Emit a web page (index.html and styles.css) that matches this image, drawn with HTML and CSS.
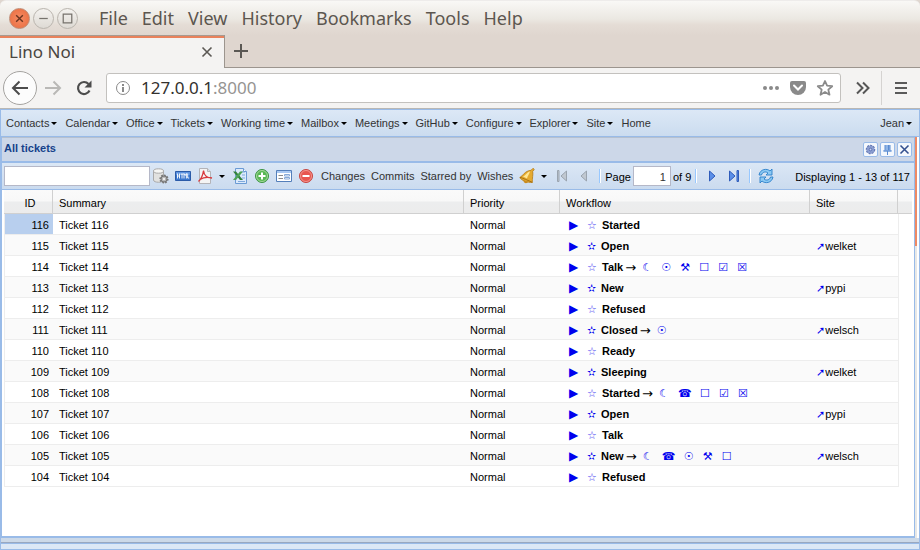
FILE: index.html
```html
<!DOCTYPE html>
<html lang="en">
<head>
<meta charset="utf-8">
<title>Lino Noi</title>
<link rel="stylesheet" href="styles.css">
</head>
<body>
<header class="titlebar">
  <div class="winbtns">
    <button class="win win-close" aria-label="Close window"><svg viewBox="0 0 20 20"><path d="M6.500 6.500l7 7M13.500 6.500l-7 7"/></svg></button>
    <button class="win" aria-label="Minimize"><svg viewBox="0 0 20 20"><path d="M5.500 10h9"/></svg></button>
    <button class="win" aria-label="Maximize"><svg viewBox="0 0 20 20"><path d="M5.500 5.500h9v9h-9z"/></svg></button>
  </div>
  <nav class="appmenu">
    <button>File</button><button>Edit</button><button>View</button><button>History</button><button>Bookmarks</button><button>Tools</button><button>Help</button>
  </nav>
</header>
<div class="tabs">
  <div class="tab"><span>Lino Noi</span>
    <button class="plain" aria-label="Close tab"><svg width="12" height="12" viewBox="0 0 12 12"><path d="M1.500 1.500l9 9M10.500 1.500l-9 9" stroke="#5b5854" stroke-width="1.600"/></svg></button>
  </div>
  <div class="tabfill"><button class="plain" aria-label="New tab"><svg width="16" height="16" viewBox="0 0 16 16"><path d="M8 1v14M1 8h14" stroke="#5b5854" stroke-width="2"/></svg></button></div>
</div>
<div class="navbar">
  <button class="back" aria-label="Back"><svg width="18" height="18" viewBox="0 0 18 18"><path d="M17 9H2M8.500 2.500L2 9l6.500 6.500" fill="none" stroke="#4c4c4c" stroke-width="2"/></svg></button>
  <button class="plain" aria-label="Forward"><svg width="18" height="18" viewBox="0 0 18 18"><path d="M1 9h15M9.500 2.500L16 9l-6.500 6.500" fill="none" stroke="#b9b8b6" stroke-width="2"/></svg></button>
  <button class="plain" aria-label="Reload"><svg width="18" height="18" viewBox="0 0 18 18"><path d="M14.500 11.500A6 6 0 1 1 13.500 5" fill="none" stroke="#4c4c4c" stroke-width="2.200"/><path d="M16.500 1.500v7h-7z" fill="#4c4c4c"/></svg></button>
  <div class="urlbox">
    <svg width="16" height="16" viewBox="0 0 16 16"><circle cx="8" cy="8" r="6.500" fill="none" stroke="#8a8a8a"/><path d="M8 7v5M8 4v2" stroke="#6d6d6d" stroke-width="1.600"/></svg>
    <div class="url">127.0.0.1<span>:8000</span></div>
    <svg width="18" height="6" viewBox="0 0 18 6" fill="#8a8a8a"><circle cx="3" cy="3" r="2"/><circle cx="9" cy="3" r="2"/><circle cx="15" cy="3" r="2"/></svg>
    <svg width="16" height="16" viewBox="0 0 16 16"><path d="M2 1h12q2 0 2 2v4a8 8 0 0 1-16 0V3q0-2 2-2z" fill="#8a8a8a"/><path d="M4 5.500l4 4 4-4" fill="none" stroke="#fff" stroke-width="2" stroke-linecap="round"/></svg>
    <svg width="18" height="18" viewBox="0 0 18 18"><path d="M9 2l2.100 4.700 5.100.5-3.900 3.400 1.200 5.100L9 13l-4.500 2.700 1.200-5.100L1.800 7.200l5.100-.5z" fill="none" stroke="#8a8a8a" stroke-width="1.800" stroke-linejoin="round"/></svg>
  </div>
  <button class="plain more" aria-label="More tools"><svg width="14" height="14" viewBox="0 0 14 14"><path d="M1 1.500L6.500 7 1 12.500M7 1.500L12.500 7 7 12.500" fill="none" stroke="#565656" stroke-width="2"/></svg></button>
  <button class="burger" aria-label="Open menu"><svg width="12" height="12" viewBox="0 0 12 12"><path d="M0 1h12M0 6h12M0 11h12" stroke="#5a5a5a" stroke-width="2"/></svg></button>
</div>
<main class="page">
  <nav class="menubar">
    <button class="dd">Contacts</button><button class="dd">Calendar</button><button class="dd">Office</button><button class="dd">Tickets</button><button class="dd">Working time</button><button class="dd">Mailbox</button><button class="dd">Meetings</button><button class="dd">GitHub</button><button class="dd">Configure</button><button class="dd">Explorer</button><button class="dd">Site</button><button>Home</button><button class="dd user">Jean</button>
  </nav>
  <div class="desk">
    <section class="panel">
      <div class="phead"><h1>All tickets</h1>
        <button class="tool" aria-label="Settings"><svg viewBox="0 0 13 13"><circle cx="6.500" cy="6.500" r="4" fill="#8a9dd0" stroke="#6478b4" stroke-width="1.500" stroke-dasharray="2 1"/><circle cx="6.500" cy="6.500" r="3.500" fill="#8a9dd0"/><circle cx="6.500" cy="6.500" r="1.300" fill="#c9d5f2" stroke="#5065a8" stroke-width=".8"/></svg></button>
        <button class="tool" aria-label="Pin"><svg viewBox="0 0 13 13"><path d="M4 2h5v5h1.500v1.500h-8V7H4z" fill="#8fb4e6"/><path d="M4 2v5M7.500 2v5M9 2v5M2.500 8h8M6.500 8v4" stroke="#5a8bd0" fill="none"/></svg></button>
        <button class="tool" aria-label="Close"><svg viewBox="0 0 13 13"><path d="M2.500 2.500l8 8M10.500 2.500l-8 8" stroke="#34508f" stroke-width="1.600"/></svg></button>
      </div>
      <div class="toolbar">
        <input class="search" type="text" aria-label="Quick search">
        <button class="ic" aria-label="Parameters"><svg viewBox="0 0 16 16"><path d="M.5 3v9c0 3 10 3 10 0V3z" fill="#e2e2e0" stroke="#aaa"/><ellipse cx="5.500" cy="3" rx="5" ry="2.200" fill="#f6f6f4" stroke="#aaa"/><circle cx="11" cy="11" r="3.400" fill="#aaa" stroke="#777" stroke-width="2.400" stroke-dasharray="1.600 1"/><circle cx="11" cy="11" r="3" fill="#b4b4b4" stroke="#777"/><circle cx="11" cy="11" r="1.200" fill="#eee"/></svg></button>
        <button class="ic" aria-label="HTML"><svg viewBox="0 0 16 16"><path d="M.5 3.500h15v9H.5z" fill="#3976ce" stroke="#2b5ba8"/><path d="M1 4h14v3H1z" fill="#5d93df"/><path d="M2.500 5.500v5M4.500 5.500v5M2.500 8h2M5.500 6h3M7 6v4.500M9 10.500v-5l1.200 2 1.200-2v5M12.700 5.500V10h1.500" fill="none" stroke="#fff" stroke-width=".9"/></svg></button>
        <button class="ic" aria-label="PDF"><svg viewBox="0 0 16 16"><path d="M2.500.5h8l3 3v12h-11z" fill="#f4f4f4" stroke="#b4b4b8"/><path d="M10.500.5v3h3" fill="#ddd" stroke="#b4b4b8"/><path d="M6.500 2.500C6 6 6 9 1.500 13.500M6.500 2.500C7 7 10 10 15 10M3 11.500c4-2.500 8-2.500 12-1.500" fill="none" stroke="#d8393c" stroke-width="1.300"/></svg></button>
        <button class="arrow" aria-label="PDF options"></button>
        <button class="ic" aria-label="Excel"><svg viewBox="0 0 16 16"><path d="M3.500.5h8l3 3v12h-11z" fill="#dceafb" stroke="#6b9bd4"/><path d="M9 4h4M10 7h3M10 10h3M6 13.500h7" stroke="#7fa9dc"/><path d="M11.500.5v3h3" fill="#fff" stroke="#6b9bd4"/><path d="M1 3.500h3l7 8.500H8z" fill="#32813c"/><path d="M8 3.500h3L4 12H1z" fill="#4da357"/></svg></button>
        <button class="ic" aria-label="Insert"><svg viewBox="0 0 16 16"><circle cx="8" cy="8" r="6.500" fill="#58b754" stroke="#3c9443"/><circle cx="8" cy="8" r="5.500" fill="none" stroke="#a5d89c"/><path d="M8 4.500v7M4.500 8h7" stroke="#fff" stroke-width="2"/></svg></button>
        <button class="ic" aria-label="Detail"><svg viewBox="0 0 16 16"><path d="M.5 2.500h15v11H.5z" fill="#fff" stroke="#547fba"/><path d="M1 3h14v2H1z" fill="#a9c8f2"/><path d="M2.500 7.500H7M2.500 10.500H7" stroke="#8b8b8b"/><path d="M8.500 6.500h5v1.500h-5zM8.500 9.500h5V11h-5z" fill="#fff" stroke="#87a9d8"/></svg></button>
        <button class="ic" aria-label="Delete"><svg viewBox="0 0 16 16"><circle cx="8" cy="8" r="6.500" fill="#e8564f" stroke="#c64742"/><circle cx="8" cy="8" r="5.500" fill="none" stroke="#f2958d"/><path d="M4.500 8h7" stroke="#fff" stroke-width="2"/></svg></button>
        <button class="tx">Changes</button><button class="tx">Commits</button><button class="tx">Starred by</button><button class="tx">Wishes</button>
        <button class="ic" aria-label="Notify"><svg viewBox="0 0 16 16"><path d="M14 .3l1.300 1.200-1.600 1.800c.6 4-.6 6.500-.4 11.200C9 14.500 2 12.500.8 9.500 4.500 7.500 5.500 3 12 2.300z" fill="#e5aa30" stroke="#b57a14" stroke-width=".8"/><path d="M4 8.500c3-1.500 4-4.500 7-5-.8 3-2.500 4.500-3 7z" fill="#ffe694"/><path d="M1 9.300c3 1 8 3 12.300 5" fill="none" stroke="#a66f12"/><path d="M4.500 12.500c0 3 3.500 3.500 4.500 1.500z" fill="#c98a1c"/></svg></button>
        <button class="arrow" aria-label="Notify options"></button>
        <button class="ic" aria-label="First page"><svg viewBox="0 0 16 16"><path d="M3.500 2.500h1.500v11H3.500zM12.500 3v10L7 8z" fill="#c0c8d1" stroke="#9aa4af"/></svg></button>
        <button class="ic" aria-label="Previous page"><svg viewBox="0 0 16 16"><path d="M10.500 3v10L5 8z" fill="#c0c8d1" stroke="#9aa4af"/></svg></button>
        <i class="sep"></i>
        <label class="pg" for="page">Page</label><input id="page" class="pageno" type="text" value="1"><span class="of">of 9</span>
        <i class="sep"></i>
        <button class="ic" aria-label="Next page"><svg viewBox="0 0 16 16"><path d="M5.500 3v10L11 8z" fill="#5b8fe8" stroke="#2f5cba"/></svg></button>
        <button class="ic" aria-label="Last page"><svg viewBox="0 0 16 16"><path d="M3.500 3v10L9 8zM11 2.500h1.500v11H11z" fill="#5b8fe8" stroke="#2f5cba"/></svg></button>
        <i class="sep"></i>
        <button class="ic" aria-label="Refresh"><svg viewBox="0 0 16 16"><path d="M1 7c1-6 8-7 11-4l2-2v6H8l2-2C8 3 4 4 3.500 7z" fill="#8cc9f3" stroke="#2b7fc9" stroke-width=".9"/><path d="M15 9c-1 6-8 7-11 4l-2 2V9h6l-2 2c2 2 6 1 6.500-2z" fill="#8cc9f3" stroke="#2b7fc9" stroke-width=".9"/></svg></button>
        <span class="info">Displaying 1 - 13 of 117</span>
      </div>
      <table class="grid">
        <colgroup><col class="c-id"><col><col class="c-pr"><col class="c-wf"><col class="c-site"><col class="c-end"></colgroup>
        <thead><tr><th class="id">ID</th><th>Summary</th><th>Priority</th><th>Workflow</th><th>Site</th><th></th></tr></thead>
        <tbody>
          <tr><td class="id sel">116</td><td>Ticket 116</td><td>Normal</td><td><div class="wf"><a href="#" class="go">▶</a><a href="#" class="st">☆</a><b>Started</b></div></td><td></td><td class="end"></td></tr>
          <tr><td class="id">115</td><td>Ticket 115</td><td>Normal</td><td><div class="wf"><a href="#" class="go">▶</a><a href="#" class="on">✫</a><b>Open</b></div></td><td><a href="#">➚</a>welket</td><td class="end"></td></tr>
          <tr><td class="id">114</td><td>Ticket 114</td><td>Normal</td><td><div class="wf"><a href="#" class="go">▶</a><a href="#" class="st">☆</a><b>Talk</b><i>→</i><a href="#" class="s">☾</a><a href="#" class="s">☉</a><a href="#" class="s">⚒</a><a href="#" class="s">☐</a><a href="#" class="s">☑</a><a href="#" class="s">☒</a></div></td><td></td><td class="end"></td></tr>
          <tr><td class="id">113</td><td>Ticket 113</td><td>Normal</td><td><div class="wf"><a href="#" class="go">▶</a><a href="#" class="on">✫</a><b>New</b></div></td><td><a href="#">➚</a>pypi</td><td class="end"></td></tr>
          <tr><td class="id">112</td><td>Ticket 112</td><td>Normal</td><td><div class="wf"><a href="#" class="go">▶</a><a href="#" class="st">☆</a><b>Refused</b></div></td><td></td><td class="end"></td></tr>
          <tr><td class="id">111</td><td>Ticket 111</td><td>Normal</td><td><div class="wf"><a href="#" class="go">▶</a><a href="#" class="on">✫</a><b>Closed</b><i>→</i><a href="#" class="s">☉</a></div></td><td><a href="#">➚</a>welsch</td><td class="end"></td></tr>
          <tr><td class="id">110</td><td>Ticket 110</td><td>Normal</td><td><div class="wf"><a href="#" class="go">▶</a><a href="#" class="st">☆</a><b>Ready</b></div></td><td></td><td class="end"></td></tr>
          <tr><td class="id">109</td><td>Ticket 109</td><td>Normal</td><td><div class="wf"><a href="#" class="go">▶</a><a href="#" class="on">✫</a><b>Sleeping</b></div></td><td><a href="#">➚</a>welket</td><td class="end"></td></tr>
          <tr><td class="id">108</td><td>Ticket 108</td><td>Normal</td><td><div class="wf"><a href="#" class="go">▶</a><a href="#" class="st">☆</a><b>Started</b><i>→</i><a href="#" class="s">☾</a><a href="#" class="s tel">☎</a><a href="#" class="s">☐</a><a href="#" class="s">☑</a><a href="#" class="s">☒</a></div></td><td></td><td class="end"></td></tr>
          <tr><td class="id">107</td><td>Ticket 107</td><td>Normal</td><td><div class="wf"><a href="#" class="go">▶</a><a href="#" class="on">✫</a><b>Open</b></div></td><td><a href="#">➚</a>pypi</td><td class="end"></td></tr>
          <tr><td class="id">106</td><td>Ticket 106</td><td>Normal</td><td><div class="wf"><a href="#" class="go">▶</a><a href="#" class="st">☆</a><b>Talk</b></div></td><td></td><td class="end"></td></tr>
          <tr><td class="id">105</td><td>Ticket 105</td><td>Normal</td><td><div class="wf"><a href="#" class="go">▶</a><a href="#" class="on">✫</a><b>New</b><i>→</i><a href="#" class="s">☾</a><a href="#" class="s tel">☎</a><a href="#" class="s">☉</a><a href="#" class="s">⚒</a><a href="#" class="s">☐</a></div></td><td><a href="#">➚</a>welsch</td><td class="end"></td></tr>
          <tr><td class="id">104</td><td>Ticket 104</td><td>Normal</td><td><div class="wf"><a href="#" class="go">▶</a><a href="#" class="st">☆</a><b>Refused</b></div></td><td></td><td class="end"></td></tr>
        </tbody>
      </table>
    </section>
    <div class="scroll"><div class="thumb"></div></div>
  </div>
  <div class="foot"></div>
  <div class="status"></div>
</main>
</body>
</html>
```
FILE: styles.css
```css
* { box-sizing: border-box; }
body {
  margin: 0;
  min-height: 100vh;
  display: flex;
  flex-direction: column;
  background: #dfd6cf;
  font: 11px/13px "Liberation Sans", Arial, sans-serif;
  color: #000;
}
button { font: inherit; color: inherit; background: none; border: 0; padding: 0; white-space: nowrap; }
svg { display: block; flex: none; }

/* Window frame */
.titlebar {
  height: 35px;
  display: flex;
  align-items: center;
  padding-left: 9px;
  border-radius: 6px 6px 0 0;
  background: linear-gradient(#f9f8f6 0, #ebe8e2 18px, #e4dcd5 24px, #dfd6cf 35px);
  border-top: 1px solid #eeeceb;
}
.winbtns { display: flex; gap: 3px; }
.win {
  width: 21px;
  height: 21px;
  border: 1px solid #b9b4ad;
  border-radius: 50%;
  background: linear-gradient(#f4f2ef, #dedad4);
}
.win svg { width: 19px; height: 19px; fill: none; stroke: #76726c; stroke-width: 1.3; }
.win-close { background: radial-gradient(#f58b63, #e96b3d); border-color: #bf8a73; }
.win-close svg { stroke: #6b3420; stroke-width: 1.5; }
.appmenu {
  display: flex;
  gap: 14px;
  margin-left: 21px;
  font: 18px/24px "Noto Sans", sans-serif;
  color: #5c564f;
}

.tabs { display: flex; height: 33px; }
.tab {
  width: 225px;
  display: flex;
  align-items: center;
  justify-content: space-between;
  padding: 0 11px 0 9px;
  background: #f4f3f2;
  border-right: 1px solid #9c958e;
  box-shadow: inset 0 1px #a79a90, inset 0 3px #e9825c;
  font: 17px/24px "Noto Sans", sans-serif;
  color: #4a4641;
}
.tabfill { flex: 1; padding: 8px; border-bottom: 1px solid #9c958e; }

.navbar {
  height: 41px;
  display: flex;
  align-items: center;
  padding: 0 0 0 3px;
  gap: 13px;
  background: #f4f3f2;
  border-bottom: 1px solid #b9b7b4;
}
.back {
  width: 34px;
  height: 34px;
  margin-right: -6px;
  display: grid;
  place-items: center;
  background: #fcfcfc;
  border: 1px solid #a5a3a0;
  border-radius: 50%;
}
.urlbox {
  flex: 1;
  height: 30px;
  display: flex;
  align-items: center;
  gap: 10px;
  padding: 0 6px 0 8px;
  background: #fff;
  border: 1px solid #c3c1be;
  border-radius: 3px;
}
.url { flex: 1; font: 17px/24px "Noto Sans", sans-serif; color: #33312e; }
.url span { color: #969492; }
.more { margin-left: 2px; }
.burger { width: 39px; height: 34px; padding-left: 13px; margin-left: -2px; border-left: 1px solid #d5d3d1; }

/* Application */
.page {
  flex: 1;
  display: flex;
  flex-direction: column;
  border: 1px solid #99bbe8;
  background: #ccd9e8;
}
.menubar {
  height: 27px;
  display: flex;
  align-items: center;
  gap: 8px;
  padding: 0 7px 0 5px;
  color: #333;
  background: linear-gradient(#dce8f6, #cbdcef);
  border-bottom: 1px solid #99bbe8;
}
.dd { display: flex; align-items: center; gap: 2px; }
.dd::after, .arrow::after {
  content: "";
  border: solid transparent;
  border-width: 3px 3px 0;
  border-top-color: #000;
}
.user { margin-left: auto; }

.desk { flex: 1; display: flex; }
.panel {
  flex: 1;
  min-width: 0;
  display: flex;
  flex-direction: column;
  border: solid #99bbe8;
  border-width: 0 1px 2px 1px;
  background: #fff;
}
.phead {
  height: 26px;
  display: flex;
  align-items: center;
  gap: 2px;
  padding: 0 2px;
  background: #ccd7e8;
  border-top: 1px solid #b4c0d0;
  border-bottom: 2px solid #99bbe8;
}
.phead h1 { flex: 1; margin: 0; padding-bottom: 2px; font: bold 11px/13px "Liberation Sans", Arial, sans-serif; color: #15428b; }
.tool { width: 15px; height: 15px; border: 1px solid #99bbe8; border-radius: 2px; background: #f4f8fd; }
.tool svg { width: 13px; height: 13px; }
.toolbar {
  height: 27px;
  display: flex;
  align-items: center;
  padding: 0 4px 0 2px;
  color: #333;
  background: linear-gradient(#dbe7f5, #cbdbef);
  border-bottom: 1px solid #99bbe8;
}
input { font: inherit; color: #333; border: 1px solid #b5b8c8; background: #fff; }
.search { width: 146px; height: 20px; }
.ic { width: 22px; height: 22px; padding: 3px; flex: none; }
.ic svg { width: 16px; height: 16px; }
.arrow { width: 13px; height: 22px; padding-right: 2px; display: grid; place-items: center; }
.tx { padding: 0 3px; }
.ic + .tx { margin-left: 1px; }
.sep { width: 1px; height: 14px; margin: 0 5px 0 4px; background: #98c8ff; box-shadow: 1px 0 #fff; }
.pg, .of, .info { color: #000; white-space: nowrap; }
.pageno { width: 38px; height: 20px; margin: 0 2px; text-align: right; padding: 3px 4px 1px; }
.pg, .of, .info { padding-top: 2px; }
.info { margin-left: auto; }

.grid { width: 100%; table-layout: fixed; border-collapse: separate; border-spacing: 0; padding: 0 2px; }
.c-id { width: 49px; }
.c-pr { width: 96px; }
.c-wf { width: 250px; }
.c-site { width: 88px; }
.c-end { width: 14px; }
th {
  height: 24px;
  padding: 4px 6px 0;
  font-weight: normal;
  text-align: left;
  background: linear-gradient(#fafafa 0, #f8f8f8 11px, #ecedee 12px, #ececec 100%);
  border-right: 1px solid #d0d0d0;
  border-bottom: 1px solid #d0d0d0;
}
th.id { text-align: center; padding-left: 10px; }
th:last-child { border-right: 0; }
td {
  height: 21px;
  padding: 3px 6px 0;
  border-bottom: 1px solid #ededed;
  white-space: nowrap;
}
td:first-child { border-left: 1px solid #ededed; }
td.id { text-align: right; padding-right: 4px; }
tbody tr:nth-child(even) td { background: #fafafa; }
td.sel { background: #b8cfee; }
tbody tr td.end { background: linear-gradient(#ededed, #ededed) 0 0 / 1px 100% no-repeat; border-bottom: 0; }
a { color: #00e; text-decoration: none; font-family: "DejaVu Sans", sans-serif; }
.wf { display: flex; align-items: center; padding-left: 3px; }
.wf .go { width: 18px; font-size: 12px; }
.wf .s { width: 19px; }
.wf .st { width: 15px; opacity: .75; }
.wf .on { width: 14px; }
.wf i { font: 13px/13px "DejaVu Sans", sans-serif; width: 17px; margin-left: 2px; }
.wf .tel { width: 22px; }

.scroll { width: 4px; background: linear-gradient(90deg, #e8e8e6 50%, #fff 50%); }
.thumb { width: 2px; height: 109px; background: #ee8a65; }
.foot { height: 5px; background: #ccd9e8; border-bottom: 1px solid #99a8c0; }
.status { height: 6px; background: #dce8f6; border-top: 1px solid #99bbe8; }
```
